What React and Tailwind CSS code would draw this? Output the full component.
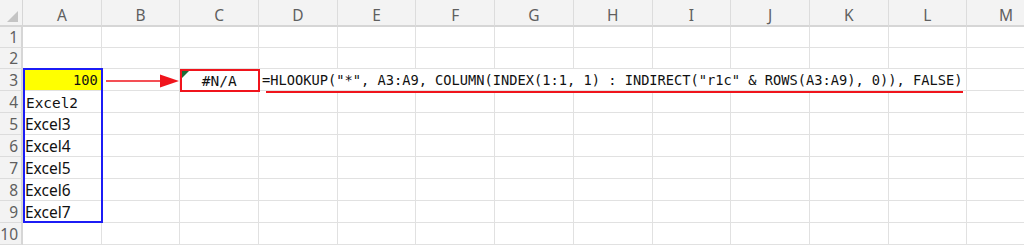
import React from "react";

const COLS = ["A", "B", "C", "D", "E", "F", "G", "H", "I", "J", "K", "L", "M"];
const ROWS = [1, 2, 3, 4, 5, 6, 7, 8, 9, 10];

const mono = "font-['DejaVu_Sans_Mono',monospace] text-[13.7px] leading-none pb-[2px]";
const sans = "font-['Noto_Sans',sans-serif] text-[15.5px] leading-none pb-[2px]";

const FORMULA =
  '=HLOOKUP("*", A3:A9, COLUMN(INDEX(1:1, 1) : INDIRECT("r1c" & ROWS(A3:A9), 0)), FALSE)';

// cells that the overflowing formula in D3 runs across (Excel hides their gridlines)
const OVERFLOW = ["D", "E", "F", "G", "H", "I", "J", "K"];

function cellContent(col, row) {
  if (col === "A" && row === 3) {
    return (
      <div className={`h-full w-full bg-[#ffff00] flex items-end justify-end pr-[3px] text-[#111] ${mono}`}>
        100
      </div>
    );
  }
  if (col === "A" && row === 4) {
    return <div className={`h-full flex items-end pl-[3px] text-[#111] ${mono} text-[14.4px]`}>Excel2</div>;
  }
  if (col === "A" && row >= 5 && row <= 9) {
    return (
      <div className={`h-full flex items-end pl-[2px] text-[#111] ${sans}`}>
        Excel{row - 2}
      </div>
    );
  }
  if (col === "C" && row === 3) {
    return (
      <div className={`relative h-full flex items-end justify-center text-[#111] ${mono} text-[14.5px]`}>
        <span className="absolute left-[2px] top-[2px] w-0 h-0 border-t-[7px] border-r-[7px] border-t-[#1d6b36] border-r-transparent" />
        #N/A
      </div>
    );
  }
  if (col === "D" && row === 3) {
    return (
      <div className={`h-full flex items-end pl-[3px] whitespace-nowrap text-[#111] ${mono}`}>
        {FORMULA}
      </div>
    );
  }
  return null;
}

export default function App() {
  return (
    <div className="relative w-[1024px] h-[245px] overflow-hidden bg-white">
      <div className="grid grid-cols-[23px_repeat(13,78.7px)] grid-rows-[27px_21px_21px_repeat(8,22px)]">
        {/* corner */}
        <div className="relative bg-[#f3f3f3] border-r border-b-2 border-[#d6d6d6]">
          <span className="absolute right-[4px] bottom-[3px] w-0 h-0 border-b-[11px] border-l-[11px] border-b-[#c4c4c4] border-l-transparent" />
        </div>
        {COLS.map((c) => (
          <div
            key={c}
            className={`flex items-end justify-center bg-[#f3f3f3] border-r border-b-2 border-r-[#dcdcdc] border-b-[#d6d6d6] text-[#5f5f5f] ${sans}`}
          >
            {c}
          </div>
        ))}
        {ROWS.map((r) => (
          <React.Fragment key={r}>
            <div className={`flex items-end justify-end pr-[3px] bg-[#f3f3f3] border-r-2 border-b border-r-[#d6d6d6] border-b-[#dcdcdc] text-[#5f5f5f] ${sans}`}>
              {r}
            </div>
            {COLS.map((c) => {
              const overflowed = r === 3 && OVERFLOW.includes(c);
              return (
                <div
                  key={c}
                  className={`min-w-0 border-b border-[#e1e1e1] ${overflowed ? "" : "border-r"}`}
                >
                  {cellContent(c, r)}
                </div>
              );
            })}
          </React.Fragment>
        ))}
      </div>

      {/* annotations drawn over the sheet */}
      <div className="absolute left-[23px] top-[68px] w-[80px] h-[155px] border-2 border-[#1c1cf5]" />
      <div className="absolute left-[180px] top-[69px] w-[80px] h-[23px] border-2 border-[#f0141c]" />
      <svg className="absolute left-[105px] top-[73px]" width="76" height="16" viewBox="0 0 76 16">
        <line x1="1" y1="8" x2="58" y2="8" stroke="#f0141c" strokeWidth="1.6" />
        <polygon points="55,1.5 74,8 55,14.5" fill="#f0141c" />
      </svg>
      <div className="absolute left-[266px] top-[91px] w-[697px] h-[2px] bg-[#f0141c]" />
    </div>
  );
}
